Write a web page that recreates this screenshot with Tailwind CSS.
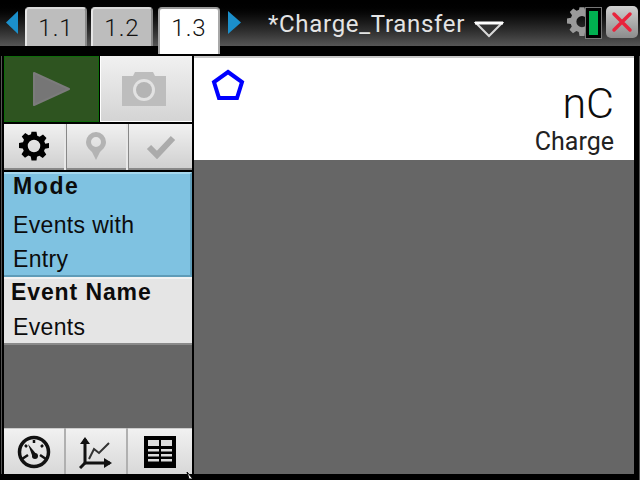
<!DOCTYPE html>
<html>
<head>
<script src="https://cdn.jsdelivr.net/npm/@tailwindcss/browser@4"></script>
</head>
<body class="m-0 bg-black">
<div class="w-[640px] h-[480px] overflow-hidden bg-black flex flex-col font-['Liberation_Sans',sans-serif] relative">
  <!-- header -->
  <div class="h-[46px] shrink-0 flex items-start bg-gradient-to-b from-[#000000] to-[#565656] relative">
    <svg class="ml-[6px] mt-[11px] w-[12px] h-[23px]" viewBox="0 0 12 23"><path d="M12 0 L0 11.500 L12 23 Z" fill="#1b8fcb"/></svg>
    <div class="ml-[7px] mt-[7px] w-[62px] h-[39px] bg-[#bdbdbd] border-t-2 border-l-2 border-r-2 border-t-[#d8d8d8] border-l-[#e6e6e6] border-r-[#8a8a8a] rounded-t-sm flex justify-center pt-[2px]"><span class="text-[#111] text-[24px] leading-[34px] tracking-[1px] font-['Roboto',sans-serif] font-light">1.1</span></div>
    <div class="ml-[4px] mt-[7px] w-[62px] h-[39px] bg-[#bdbdbd] border-t-2 border-l-2 border-r-2 border-t-[#d8d8d8] border-l-[#e6e6e6] border-r-[#8a8a8a] rounded-t-sm flex justify-center pt-[2px]"><span class="text-[#111] text-[24px] leading-[34px] tracking-[1px] font-['Roboto',sans-serif] font-light">1.2</span></div>
    <div class="ml-[5px] mt-[7px] w-[62px] h-[47px] bg-white border-t-2 border-x-2 border-t-[#9a9a9a] border-x-[#a8a8a8] border-b-0 rounded-t-sm flex justify-center pt-[2px] relative z-10 -mb-2"><span class="text-[#111] text-[24px] leading-[34px] tracking-[1px] font-['Roboto',sans-serif] font-light">1.3</span></div>
    <svg class="ml-[8px] mt-[11px] w-[13px] h-[23px]" viewBox="0 0 13 23"><path d="M0 0 L13 11.500 L0 23 Z" fill="#1b8fcb"/></svg>
    <span class="ml-[27px] mt-[8px] text-[#e4e4e4] text-[24px] leading-[32px] tracking-[0.7px] font-['Roboto',sans-serif] whitespace-nowrap">*Charge_Transfer</span>
    <svg class="ml-[9px] mt-[20px] w-[30px] h-[18px]" viewBox="0 0 30 18"><path d="M2 3 H28 L15 16 Z" fill="#333" stroke="#d8d8d8" stroke-width="2"/><path d="M1 3 H29" stroke="#fff" stroke-width="3"/></svg>
    <svg class="absolute left-[567px] top-[6px] w-[30px] h-[30px]" viewBox="0 0 24 24"><path fill="#9a9a9a" fill-rule="evenodd" d="M10 1h4l.6 3.200 1.900.8 2.700-1.800 2.800 2.800-1.800 2.700.8 1.900L24 10v4l-3.200.6-.8 1.900 1.800 2.700-2.800 2.800-2.700-1.800-1.900.8L14 24h-4l-.6-3.200-1.900-.8-2.700 1.800-2.800-2.800 1.800-2.700-.8-1.900L0 14v-4l3.200-.6.8-1.900L2.200 4.800 5 2l2.700 1.800 1.900-.8zM12 8a4.500 4.500 0 1 0 0 9 4.500 4.500 0 0 0 0-9z"/></svg>
    <div class="absolute left-[586px] top-[8px] w-[15px] h-[30px] bg-[#00b050] border-[3px] border-black outline outline-1 outline-[#777]"></div>
    <div class="absolute left-[606px] top-[6px] w-[32px] h-[32px] rounded-[5px] bg-gradient-to-b from-[#d0d0d0] to-[#8c8c8c] flex items-center justify-center">
      <svg class="w-[22px] h-[22px]" viewBox="0 0 22 22"><path d="M3 3 L19 19 M19 3 L3 19" stroke="#e8243c" stroke-width="3.5" stroke-linecap="round"/></svg>
    </div>
  </div>

  <!-- body -->
  <div class="flex-1 flex pt-[10px] pb-[6px] pl-[4px] pr-[6px] relative">
    <div class="absolute left-[1px] top-[10px] bottom-[6px] w-px bg-[#555]"></div>
    <div class="absolute right-0 top-[10px] bottom-0 w-px bg-[#555]"></div>
    <!-- sidebar -->
    <div class="w-[188px] shrink-0 flex flex-col bg-[#666666]">
      <div class="flex h-[66px] bg-black gap-[1px]">
        <div class="w-[95px] bg-[#2e5420] border border-[#0e6b0a] flex items-center justify-center">
          <svg class="w-[40px] h-[36px]" viewBox="0 0 40 36"><path d="M2 2 L37 18 L2 34 Z" fill="#767676" stroke="#7b7b7b" stroke-linejoin="round" stroke-width="2"/></svg>
        </div>
        <div class="flex-1 bg-gradient-to-b from-[#f1f1f1] to-[#d4d4d4] border-b border-l border-white flex items-center justify-center pr-[5px]">
          <svg class="w-[46px] h-[36px]" viewBox="0 0 46 36"><path d="M1 5 H12 L14 1 H32 L34 5 H45 V35 H1 Z" fill="#bdbdbd"/><circle cx="23" cy="19" r="11" fill="#e2e2e2"/><circle cx="23" cy="19" r="8" fill="#b4b4b4"/></svg>
        </div>
      </div>
      <div class="h-[2px] bg-black"></div>
      <div class="flex h-[46px] bg-black">
        <div class="w-[60px] bg-gradient-to-b from-[#f1f1f1] to-[#d0d0d0] border-b-2 border-[#888] flex items-center justify-center">
          <svg class="w-[30px] h-[30px]" viewBox="0 0 24 24"><path fill="#000" fill-rule="evenodd" d="M10 1h4l.6 3.200 1.900.8 2.700-1.800 2.800 2.800-1.800 2.700.8 1.900L24 10v4l-3.200.6-.8 1.900 1.800 2.700-2.800 2.800-2.700-1.800-1.900.8L14 24h-4l-.6-3.200-1.900-.8-2.700 1.800-2.800-2.800 1.800-2.700-.8-1.900L0 14v-4l3.200-.6.8-1.900L2.200 4.800 5 2l2.700 1.800 1.900-.8zM12 7.500a5 5 0 1 0 0 10 5 5 0 0 0 0-10z" transform="translate(0 -.5)"/></svg>
        </div>
        <div class="w-[2px] bg-[#e8e8e8]"></div>
        <div class="w-[60px] bg-gradient-to-b from-[#f1f1f1] to-[#d0d0d0] border-b-2 border-l border-[#888] flex items-center justify-center">
          <svg class="w-[22px] h-[28px] -ml-[2px]" viewBox="0 0 22 28"><path fill="#b3b3b3" fill-rule="evenodd" d="M11 0a10 10 0 0 1 10 10c0 5-4 8-6 10l-4 8-4-8C5 18 1 15 1 10A10 10 0 0 1 11 0zm0 5a5 5 0 1 0 0 10 5 5 0 0 0 0-10z"/></svg>
        </div>
        <div class="w-[2px] bg-[#e8e8e8]"></div>
        <div class="flex-1 bg-gradient-to-b from-[#f1f1f1] to-[#d0d0d0] border-b-2 border-l border-[#888] flex items-center justify-center">
          <svg class="w-[30px] h-[26px]" viewBox="0 0 30 26"><path d="M3 14 L11 22 L27 5" fill="none" stroke="#ababab" stroke-width="6"/></svg>
        </div>
      </div>
      <div class="h-[2px] bg-black"></div>
      <div class="h-[105px] bg-[#7fc2e1] border-r-2 border-b-2 border-t-2 border-r-[#5f9cb8] border-b-[#5f9cb8] border-t-[#a6d8ee] pl-[9px] text-[#0c0c0c] text-[23px] tracking-[0.35px]">
        <div class="font-bold leading-[24px] tracking-[1.6px] h-[33px]">Mode</div>
        <div class="leading-[34px] mt-[1px]">Events with</div>
        <div class="leading-[34px]">Entry</div>
      </div>
      <div class="h-[2px] bg-[#f3f3f3]"></div>
      <div class="h-[66px] bg-[#e5e5e5] border-b-2 border-[#8a8a8a] pl-[7px] text-[#0c0c0c] text-[23px] tracking-[0.35px]">
        <div class="font-bold leading-[26px] h-[32px] tracking-[0.9px]">Event Name</div>
        <div class="leading-[32px] pl-[2px]">Events</div>
      </div>
      <div class="flex-1"></div>
      <div class="flex h-[46px] bg-black">
        <div class="w-[60px] bg-gradient-to-b from-[#f1f1f1] to-[#d8d8d8] border-t border-[#ccc] flex items-center justify-center">
          <svg class="w-[34px] h-[34px]" viewBox="0 0 34 34"><circle cx="17" cy="17" r="14.500" fill="none" stroke="#111" stroke-width="3.500"/><path d="M5 24 L11 20 M29 24 L23 20 M17 5 v3 M8 10 l2 2 M26 10 l-2 2" stroke="#111" stroke-width="2.500"/><path d="M11 9 L20 20 L16 23 Z" fill="#111"/><circle cx="18" cy="21" r="3" fill="#111"/></svg>
        </div>
        <div class="w-[2px] bg-[#b0b0b0]"></div>
        <div class="w-[60px] bg-gradient-to-b from-[#f1f1f1] to-[#d8d8d8] border-t border-[#ccc] flex items-center justify-center">
          <svg class="w-[34px] h-[34px]" viewBox="0 0 34 34"><path d="M6 4 V28 H31" fill="none" stroke="#111" stroke-width="3"/><path d="M1 9 L6 2 L11 9 Z M25 23 L33 28 L25 33 Z" fill="#111"/><path d="M1 33 L6 28" stroke="#111" stroke-width="3"/><path d="M10 24 L15 14 L20 18 L30 8" fill="none" stroke="#333" stroke-width="2"/></svg>
        </div>
        <div class="w-[2px] bg-[#b0b0b0]"></div>
        <div class="flex-1 bg-gradient-to-b from-[#f1f1f1] to-[#d8d8d8] border-t border-[#ccc] flex items-center justify-center">
          <svg class="w-[32px] h-[32px]" viewBox="0 0 32 32"><rect width="32" height="32" fill="#000"/><path d="M4 4h11v6H4zM17 4h11v6H17zM4 13h11v2.500H4zM17 13h11v2.500H17zM4 18h11v2.500H4zM17 18h11v2.500H17zM4 23h11v2.500H4zM17 23h11v2.500H17z" fill="#ddd"/></svg>
        </div>
      </div>
    </div>
    <div class="w-[2px] shrink-0 bg-black"></div>
    <!-- main -->
    <div class="flex-1 flex flex-col bg-[#666666]">
      <div class="h-[104px] bg-white border-t-2 border-[#c8c8c8] relative text-right pr-[20px]">
        <svg class="absolute left-[17px] top-[11px] w-[34px] h-[32px]" viewBox="0 0 34 32"><path d="M17 3 L31 13 L26 29 L8 29 L3 13 Z" fill="none" stroke="#0000ff" stroke-width="4"/></svg>
        <div class="text-[#0c0c0c] text-[43px] leading-[44px] pt-[23px] font-['Roboto',sans-serif] font-light h-[67px]">nC</div>
        <div class="text-[#222] text-[25px] leading-[28px] font-['Roboto',sans-serif] mt-[3px]">Charge</div>
      </div>
    </div>
    <svg class="absolute left-[186px] top-[426px] w-[10px] h-[10px]" viewBox="0 0 10 10"><path d="M1 0 L7 7 H3 Z" fill="#fff" stroke="#000"/></svg>
  </div>
</div>
</body>
</html>
